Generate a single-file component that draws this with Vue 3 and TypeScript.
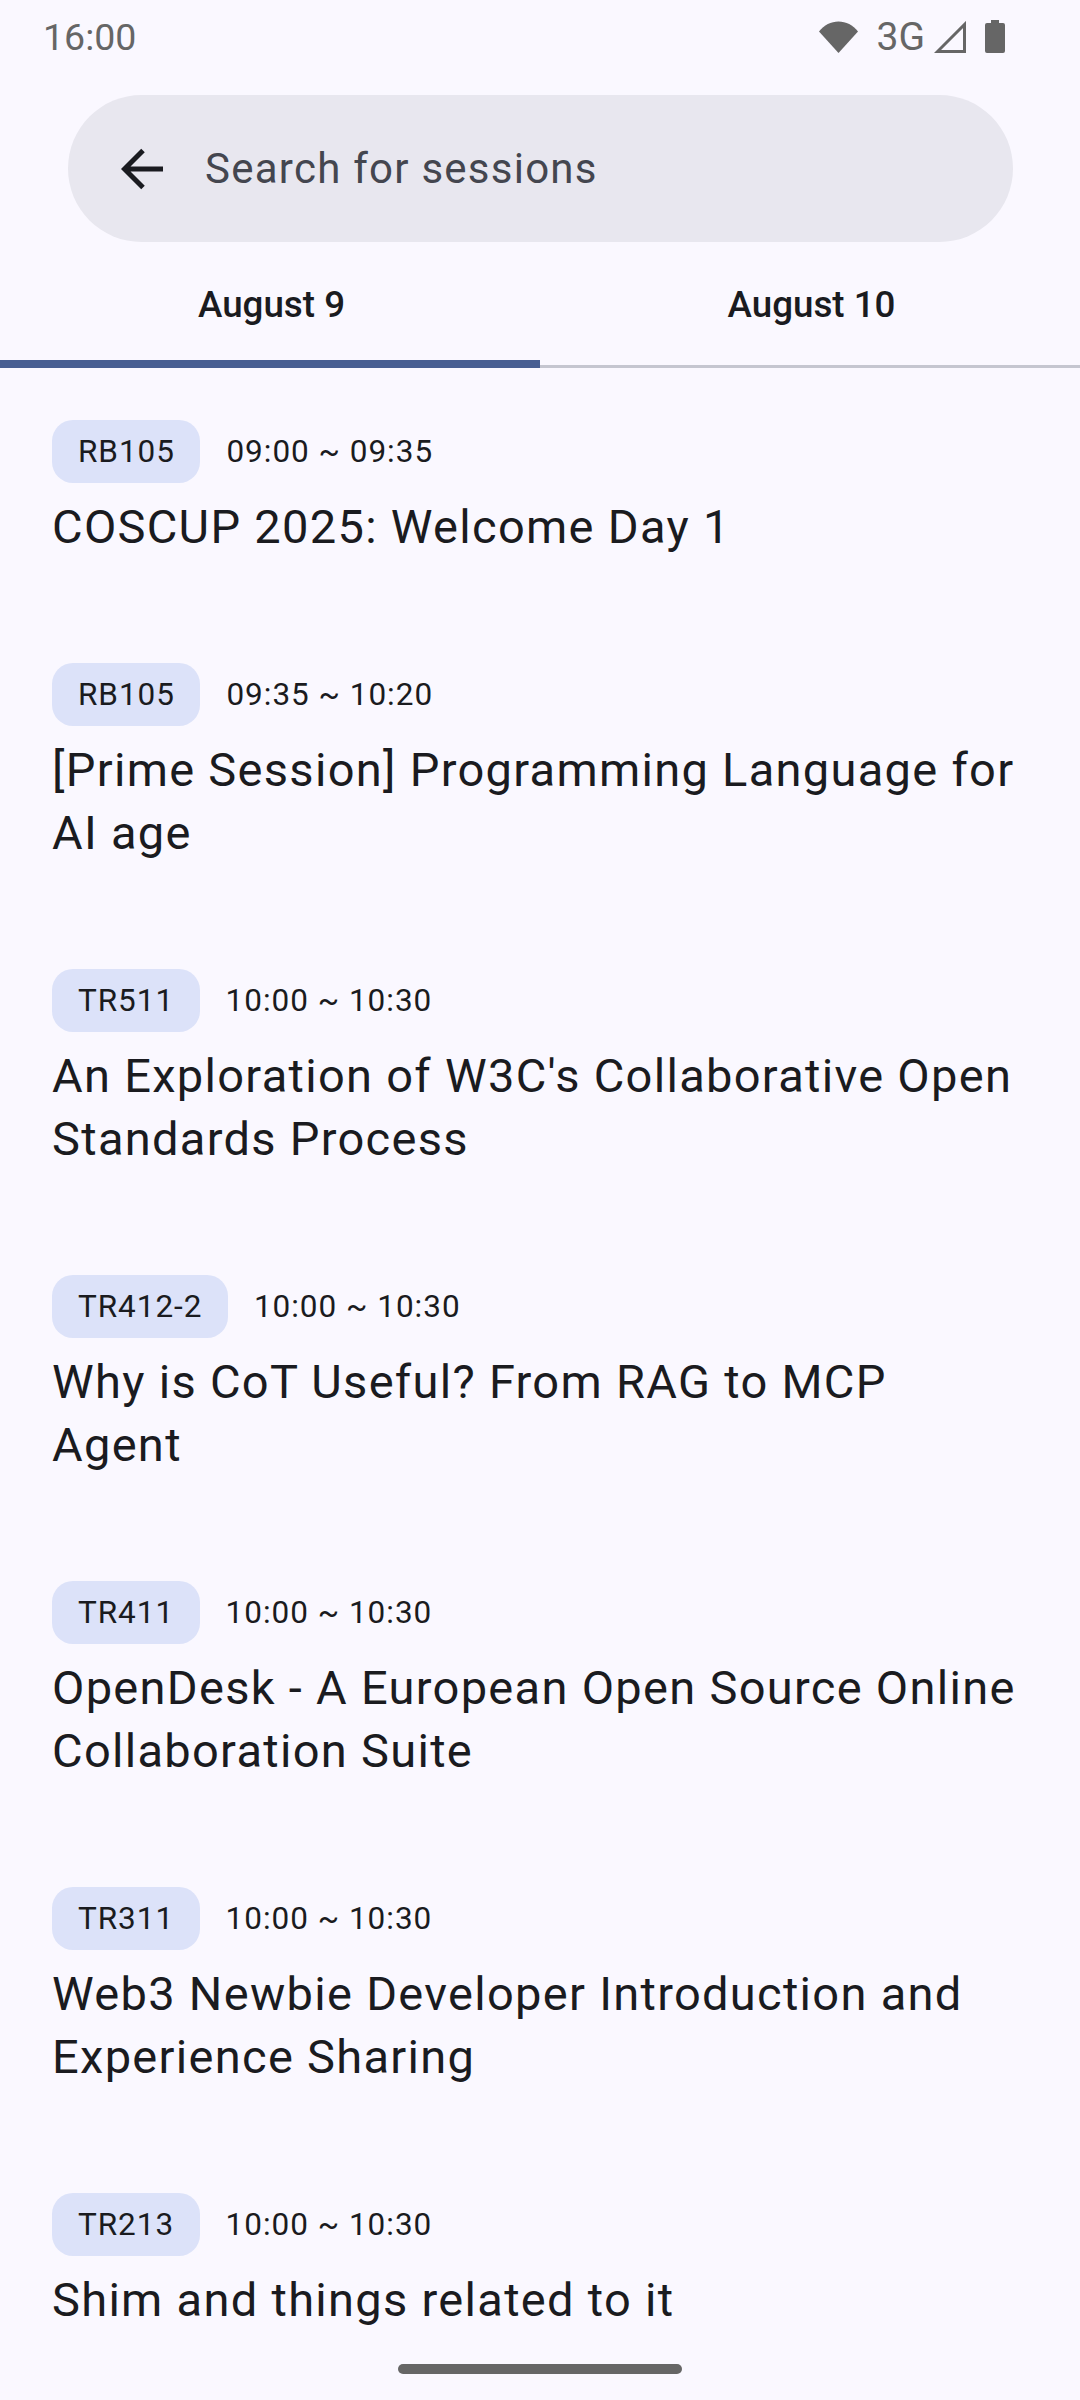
<script setup lang="ts">
interface Session {
  room: string
  time: string
  title: string
}

const sessions: Session[] = [
  { room: 'RB105', time: '09:00 ~ 09:35', title: 'COSCUP 2025: Welcome Day 1' },
  { room: 'RB105', time: '09:35 ~ 10:20', title: '[Prime Session] Programming Language for AI age' },
  { room: 'TR511', time: '10:00 ~ 10:30', title: "An Exploration of W3C's Collaborative Open Standards Process" },
  { room: 'TR412-2', time: '10:00 ~ 10:30', title: 'Why is CoT Useful? From RAG to MCP Agent' },
  { room: 'TR411', time: '10:00 ~ 10:30', title: 'OpenDesk - A European Open Source Online Collaboration Suite' },
  { room: 'TR311', time: '10:00 ~ 10:30', title: 'Web3 Newbie Developer Introduction and Experience Sharing' },
  { room: 'TR213', time: '10:00 ~ 10:30', title: 'Shim and things related to it' },
]
</script>

<template>
  <div class="screen">
    <div class="status">
      <span class="clock">16:00</span>
      <div class="status-icons">
        <svg class="wifi" width="39" height="32" viewBox="0 0 39 32">
          <path d="M0 10.5C5 4 12 0.5 19.5 0.5S34 4 39 10.5L19.5 32Z" fill="#666" />
        </svg>
        <span class="network">3G</span>
        <svg class="signal" width="32" height="32" viewBox="0 0 32 32">
          <path d="M30.5 3.5V30.5H3.5Z" fill="none" stroke="#666" stroke-width="3" />
        </svg>
        <svg class="battery" width="20" height="33" viewBox="0 0 20 33">
          <path d="M6 0H14V3H18Q20 3 20 5V31Q20 33 18 33H2Q0 33 0 31V5Q0 3 2 3H6Z" fill="#666" />
        </svg>
      </div>
    </div>

    <div class="search">
      <svg class="back" width="42" height="42" viewBox="0 0 42 42">
        <path d="M42 21H4M22 2.5L3.5 21L22 39.5" fill="none" stroke="#1a1b20" stroke-width="5" />
      </svg>
      <span class="placeholder">Search for sessions</span>
    </div>

    <div class="tabs">
      <div class="tab active">August 9</div>
      <div class="tab">August 10</div>
    </div>

    <div class="list">
      <div v-for="(s, i) in sessions" :key="i" class="item">
        <div class="meta">
          <span class="room">{{ s.room }}</span>
          <span class="time">{{ s.time }}</span>
        </div>
        <div class="title">{{ s.title }}</div>
      </div>
    </div>

    <div class="home-bar"></div>
  </div>
</template>

<style>
html,
body {
  margin: 0;
  background: #faf8ff;
}
</style>

<style scoped>
.screen {
  position: relative;
  width: 1080px;
  height: 2400px;
  overflow: hidden;
  background: #faf8ff;
  color: #1a1b20;
  font-family: Roboto, "Noto Sans", sans-serif;
}

.status {
  height: 73px;
  padding: 0 75px 0 43px;
  display: flex;
  align-items: center;
  justify-content: space-between;
  color: #666;
}

.clock {
  font-size: 37.5px;
  padding-top: 1px;
}

.status-icons {
  display: flex;
  align-items: center;
}

.network {
  font-size: 39px;
  margin: 0 9px 0 19px;
}

.battery {
  margin-left: 19px;
}

.search {
  height: 147px;
  margin: 22px 67px 0 68px;
  padding-left: 53px;
  display: flex;
  align-items: center;
  gap: 42px;
  border-radius: 74px;
  background: #e8e7ef;
}

.placeholder {
  font-size: 42px;
  letter-spacing: 1.25px;
  color: #44464f;
}

.tabs {
  display: flex;
  height: 126px;
  box-sizing: border-box;
  border-bottom: 3px solid #c5c6d0;
}

.tab {
  flex: 1;
  height: 126px;
  box-sizing: border-box;
  padding: 40px 0 0 3px;
  text-align: center;
  font-size: 36.75px;
  font-weight: 500;
  line-height: 46px;
}

.tab.active {
  border-bottom: 8px solid #485e92;
}

.list {
  padding: 52px 52px 0;
  display: flex;
  flex-direction: column;
  gap: 105px;
}

.meta {
  display: flex;
  align-items: center;
  gap: 26px;
}

.room {
  height: 63px;
  padding: 0 25.5px 0 26px;
  display: flex;
  align-items: center;
  border-radius: 21px;
  background: #dce2f9;
  font-size: 31.5px;
  letter-spacing: 0.95px;
}

.time {
  font-size: 31.5px;
  letter-spacing: 0.98px;
}

.title {
  margin-top: 12px;
  font-size: 47px;
  line-height: 63px;
  letter-spacing: 1.3px;
}

.home-bar {
  position: absolute;
  left: 398px;
  bottom: 26px;
  width: 284px;
  height: 10px;
  border-radius: 5px;
  background: #666;
}
</style>
